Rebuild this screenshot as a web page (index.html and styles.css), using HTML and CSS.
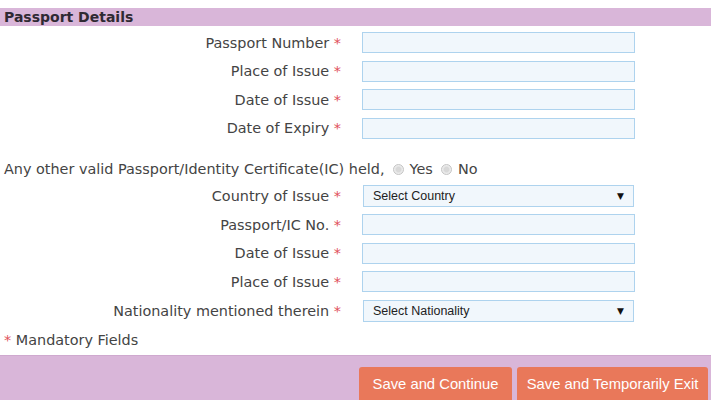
FILE: index.html
```html
<!DOCTYPE html>
<html lang="en">
<head>
    <meta charset="UTF-8">
    <meta name="viewport" content="width=device-width, initial-scale=1.0">
    <title>Passport Details</title>
    <link rel="stylesheet" href="styles.css">
</head>
<body>
    <div class="section-title">Passport Details</div>

    <!-- Passport fields -->
    <div class="form-grid first-grid">
        <label for="passportNo">Passport Number <span class="req">*</span></label>
        <input type="text" id="passportNo">

        <label for="placeIssue">Place of Issue <span class="req">*</span></label>
        <input type="text" id="placeIssue">

        <label for="dateIssue">Date of Issue <span class="req">*</span></label>
        <input type="text" id="dateIssue">

        <label for="dateExpiry">Date of Expiry <span class="req">*</span></label>
        <input type="text" id="dateExpiry">
    </div>

    <!-- Other passport / IC -->
    <div class="question">
        Any other valid Passport/Identity Certificate(IC) held,
        <label class="radio"><input type="radio" name="otherIc" value="yes"> Yes</label>
        <label class="radio"><input type="radio" name="otherIc" value="no"> No</label>
    </div>

    <div class="form-grid">
        <label for="icCountry">Country of Issue <span class="req">*</span></label>
        <div class="select-wrap">
            <select id="icCountry">
                <option>Select Country</option>
            </select>
        </div>

        <label for="icNo">Passport/IC No. <span class="req">*</span></label>
        <input type="text" id="icNo">

        <label for="icDate">Date of Issue <span class="req">*</span></label>
        <input type="text" id="icDate">

        <label for="icPlace">Place of Issue <span class="req">*</span></label>
        <input type="text" id="icPlace">

        <label for="icNationality">Nationality mentioned therein <span class="req">*</span></label>
        <div class="select-wrap">
            <select id="icNationality">
                <option>Select Nationality</option>
            </select>
        </div>
    </div>

    <p class="mandatory"><span class="req">*</span> Mandatory Fields</p>

    <div class="actions">
        <button type="button">Save and Continue</button>
        <button type="button">Save and Temporarily Exit</button>
    </div>
</body>
</html>
```

FILE: styles.css
```css
/* Basic styling */
body {
    font-family: "DejaVu Sans", Verdana, sans-serif;
    font-size: 14.4px;
    color: #444;
    margin: 0;
    padding: 8px 0 0;
    background-color: #fff;
}

.section-title {
    background-color: #d9b6d9;
    color: #2f2a33;
    font-weight: bold;
    font-size: 14px;
    height: 18px;
    line-height: 19px;
    padding: 0 4px;
}

.req {
    color: #e0505a;
}

/* Label / field grid */
.form-grid {
    display: grid;
    grid-template-columns: 341px 273px;
    column-gap: 21px;
    row-gap: 7.5px;
    align-items: center;
}

.first-grid {
    margin-top: 6px;
}

.form-grid label {
    text-align: right;
    white-space: nowrap;
}

.form-grid input,
.form-grid select {
    box-sizing: border-box;
    height: 21px;
    margin: 0;
    border: 1px solid #aed3ee;
    background-color: #f1f7fc;
    border-radius: 0;
}

.select-wrap {
    position: relative;
    height: 22px;
}

.form-grid select {
    display: block;
    width: 271px;
    height: 22px;
    margin-left: 1px;
    padding: 0 0 0 9px;
    font-family: "Liberation Sans", Arial, sans-serif;
    font-size: 12.5px;
    color: #222;
    appearance: none;
    -webkit-appearance: none;
}

/* dropdown arrow */
.select-wrap::after {
    content: "\25BC";
    position: absolute;
    right: 11px;
    top: 5px;
    font-size: 9px;
    line-height: 12px;
    color: #111;
    pointer-events: none;
}

/* Radio question */
.question {
    margin: 21px 0 7px 4px;
    line-height: 18px;
}

.radio {
    margin-left: 4px;
}

.radio input {
    appearance: none;
    -webkit-appearance: none;
    width: 11px;
    height: 11px;
    margin: 0 1px 0 0;
    border-radius: 50%;
    border: 1px solid #c4c4c4;
    background: radial-gradient(circle, #d8d8d8 0, #d8d8d8 35%, #ececec 60%);
    vertical-align: -1px;
}

.mandatory {
    margin: 9px 0 6px 4px;
    line-height: 18px;
}

/* Footer bar with buttons */
.actions {
    background-color: #d9b6d9;
    border-top: 1px solid #cfa9cf;
    display: flex;
    justify-content: flex-end;
    gap: 5px;
    padding: 11px 3px 0 0;
    height: 40px;
}

.actions button {
    background-color: #e9785a;
    color: #fff;
    border: none;
    border-radius: 3px 3px 0 0;
    font-family: "Liberation Sans", Arial, sans-serif;
    font-size: 14.8px;
    white-space: nowrap;
    padding: 0 0 6px;
    height: 40px;
    cursor: pointer;
}

.actions button:first-child {
    width: 153px;
}

.actions button:last-child {
    width: 191px;
}

.actions button:hover {
    background-color: #d9684a;
}
```
